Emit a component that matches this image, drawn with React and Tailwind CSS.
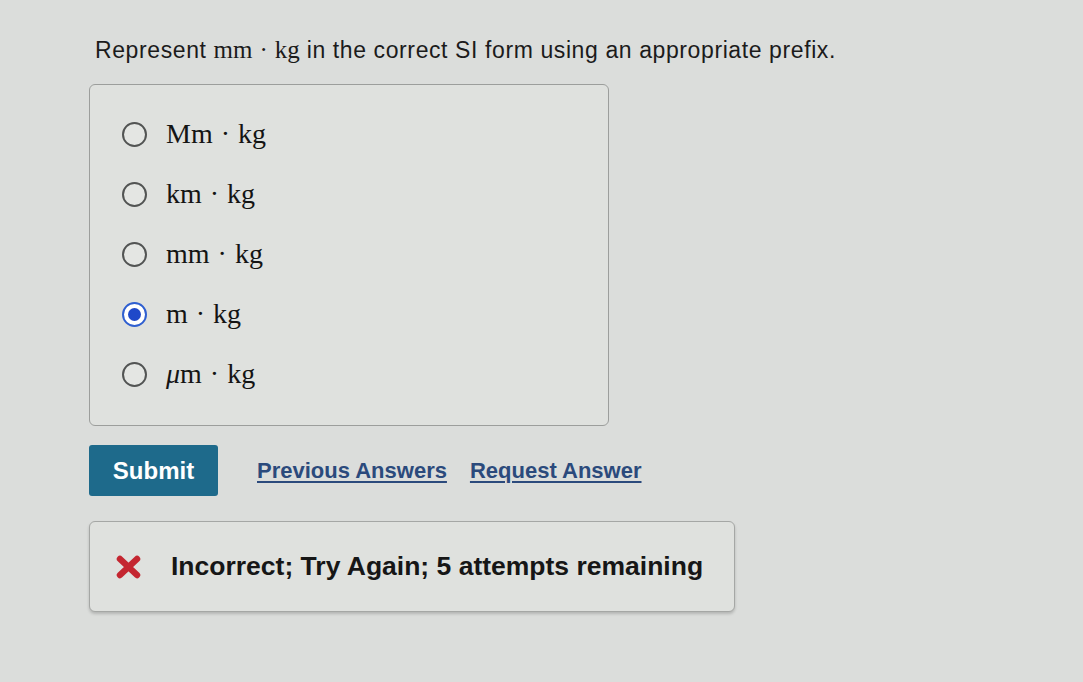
import React, { useState } from "react"

const options = [
  { id: "Mm", prefix: "Mm" },
  { id: "km", prefix: "km" },
  { id: "mm", prefix: "mm" },
  { id: "m", prefix: "m" },
  { id: "um", prefix: "μm", italicMu: true },
]

function Radio({ checked }) {
  if (checked) {
    return (
      <span className="flex h-[25px] w-[25px] shrink-0 items-center justify-center rounded-full border-[2px] border-[#2f5fd0] bg-white">
        <span className="h-[13px] w-[13px] rounded-full bg-[#1f49c9]" />
      </span>
    )
  }
  return <span className="h-[25px] w-[25px] shrink-0 rounded-full border-[2px] border-[#525453] bg-[#e4e6e3]" />
}

function Unit({ prefix, italicMu }) {
  return (
    <span className="font-['Liberation_Serif',serif] text-[28px] leading-none text-[#141414]">
      {italicMu ? (
        <>
          <i>μ</i>m
        </>
      ) : (
        prefix
      )}
      <span className="mx-[8px]">·</span>kg
    </span>
  )
}

export default function App() {
  const [selected, setSelected] = useState("m")

  return (
    <div className="min-h-screen bg-[#dbdddb] pl-[89px] pt-[35px] font-['Liberation_Sans',Arial,sans-serif] text-[#1b1b1b]">
      {/* Question */}
      <p className="ml-[6px] text-[23px] leading-[30px] tracking-[0.6px]">
        Represent{" "}
        <span className="font-['Liberation_Serif',serif] text-[25px] tracking-normal">
          mm<span className="mx-[7px]">·</span>kg
        </span>{" "}
        in the correct SI form using an appropriate prefix.
      </p>

      {/* Choices */}
      <div className="mt-[19px] h-[342px] w-[520px] rounded-[6px] border border-[#9c9e9c] bg-[#dfe1de] pl-[32px] pt-[19px]">
        {options.map((o) => (
          <label
            key={o.id}
            className="flex h-[60px] cursor-pointer items-center gap-[19px]"
            onClick={() => setSelected(o.id)}
          >
            <Radio checked={selected === o.id} />
            <Unit prefix={o.prefix} italicMu={o.italicMu} />
          </label>
        ))}
      </div>

      {/* Actions */}
      <div className="mt-[19px] flex items-center">
        <button className="h-[51px] w-[129px] rounded-[3px] bg-[#1e6a8b] text-[24px] font-bold text-white">
          Submit
        </button>
        <a className="ml-[39px] text-[22px] font-bold text-[#2b4a7c] underline underline-offset-[3px]" href="#">
          Previous Answers
        </a>
        <a className="ml-[23px] text-[22px] font-bold text-[#2b4a7c] underline underline-offset-[3px]" href="#">
          Request Answer
        </a>
      </div>

      {/* Feedback */}
      <div className="mt-[25px] flex h-[91px] w-[646px] items-center rounded-[6px] border border-[#a5a7a5] bg-[#dfe1de] pl-[26px] shadow-[0_2px_3px_rgba(0,0,0,0.18)]">
        <svg width="25" height="24" viewBox="0 0 25 24" className="shrink-0">
          <path d="M4 4 L21 20 M21 4 L4 20" stroke="#c42630" strokeWidth="6.5" strokeLinecap="round" />
        </svg>
        <span className="ml-[30px] text-[26.5px] font-bold text-[#161616]">
          Incorrect; Try Again; 5 attempts remaining
        </span>
      </div>
    </div>
  )
}
